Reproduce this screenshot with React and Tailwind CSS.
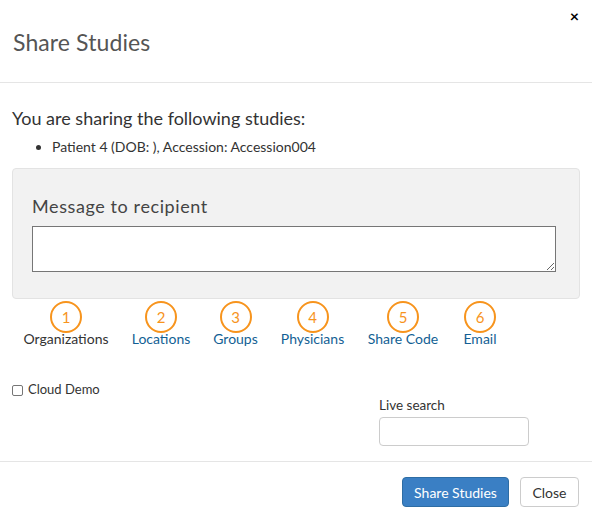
import React from 'react';

const tabs = [
  { n: 1, label: 'Organizations', w: 'w-[86px]', active: true },
  { n: 2, label: 'Locations', w: 'w-[56px]' },
  { n: 3, label: 'Groups', w: 'w-[45px]' },
  { n: 4, label: 'Physicians', w: 'w-[61px]' },
  { n: 5, label: 'Share Code', w: 'w-[72px]' },
  { n: 6, label: 'Email', w: 'w-[34px]' },
];

export default function App() {
  return (
    <div className="w-[592px] h-[519px] bg-white text-[#333] font-['Lato',sans-serif] flex flex-col">
      {/* Header */}
      <div className="relative h-[83px] border-b border-[#e5e5e5] px-[13px] flex items-center">
        <h4 className="text-[23px] leading-none text-[#555] tracking-[0.1px] mt-[3px]">Share Studies</h4>
        <button className="absolute right-[13px] top-[8px] text-[16px] font-bold text-black leading-none">×</button>
      </div>

      {/* Body */}
      <div className="px-[12px] pt-[24px] h-[378px]">
        <p className="text-[18px] leading-[22px] text-[#333]">You are sharing the following studies:</p>
        <ul className="mt-[9px] pl-[40px] list-disc text-[14px] leading-[18px]">
          <li>Patient 4 (DOB: ), Accession: Accession004</li>
        </ul>

        <div className="mt-[12px] h-[131px] bg-[#f2f2f2] border border-[#e3e3e3] rounded-[4px] px-[19px] pt-[26px]">
          <div className="text-[18px] leading-[22px] tracking-[0.6px] text-[#444]">Message to recipient</div>
          <textarea className="mt-[9px] block w-[524px] h-[46px] bg-white border border-[#767676] resize-y"></textarea>
        </div>

        <div className="flex mt-[2px] pl-[11px] gap-[24px]">
          {tabs.map((t) => (
            <div key={t.n} className={`flex flex-col items-center ${t.w}`}>
              <div className="w-[32px] h-[32px] rounded-full border-2 border-[#f7941d] text-[#f7941d] text-[15px] flex items-center justify-center leading-none">
                {t.n}
              </div>
              <span className={`-mt-[2px] whitespace-nowrap text-[14px] leading-[16px] ${t.active ? 'text-[#333]' : 'text-[#135f94]'}`}>{t.label}</span>
            </div>
          ))}
        </div>

        <div className="flex justify-between mt-[34px]">
          <label className="flex items-center gap-[5px] text-[13px] h-[18px] self-start">
            <input type="checkbox" className="w-[11px] h-[11px] appearance-none border border-[#767676] rounded-[2px] bg-white" />
            <span>Cloud Demo</span>
          </label>
          <div className="mr-[51px] mt-[15px]">
            <div className="text-[13.5px] leading-[18px] text-[#333]">Live search</div>
            <input className="mt-[3px] block w-[150px] h-[29px] border border-[#ccc] rounded-[4px] bg-white" />
          </div>
        </div>
      </div>

      {/* Footer */}
      <div className="border-t border-[#e5e5e5] flex justify-end gap-[11px] px-[13px] pt-[15px]">
        <button className="h-[30px] w-[107px] rounded-[4px] bg-[#3a7fc4] border border-[#2e6da4] text-white text-[14px]">Share Studies</button>
        <button className="h-[30px] w-[59px] rounded-[4px] bg-white border border-[#ccc] text-[#333] text-[14px]">Close</button>
      </div>
    </div>
  );
}
